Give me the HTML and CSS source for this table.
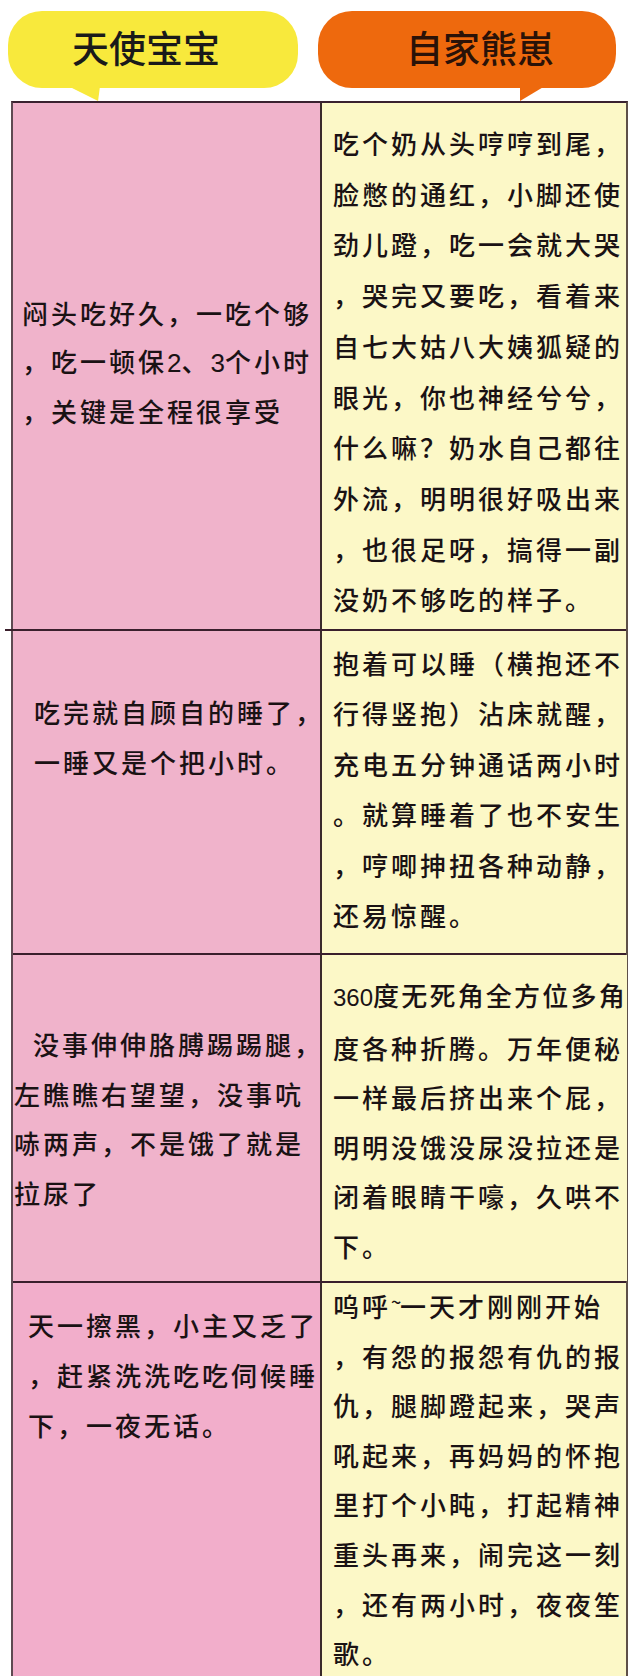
FILE: index.html
```html
<!DOCTYPE html>
<html lang="zh-CN">
<head>
<meta charset="utf-8">
<title>天使宝宝 vs 自家熊崽</title>
<link rel="stylesheet" href="styles.css">
</head>
<body>
<div class="page">
  <div class="heads">
    <div class="bubble yellow"><span class="btext">天使宝宝</span></div>
    <div class="bubble orange"><span class="btext">自家熊崽</span></div>
  </div>
  <div class="table">
    <div class="row r1">
      <div class="cell left"><p>闷头吃好久，一吃个够<br>，吃一顿保<span class="num">2</span>、<span class="num">3</span>个小时<br>，关键是全程很享受</p></div>
      <div class="cell right"><p>吃个奶从头哼哼到尾，<br>脸憋的通红，小脚还使<br>劲儿蹬，吃一会就大哭<br>，哭完又要吃，看着来<br>自七大姑八大姨狐疑的<br>眼光，你也神经兮兮，<br>什么嘛？奶水自己都往<br>外流，明明很好吸出来<br>，也很足呀，搞得一副<br>没奶不够吃的样子。</p></div>
    </div>
    <div class="row r2">
      <div class="cell left"><p>吃完就自顾自的睡了，<br>一睡又是个把小时。</p></div>
      <div class="cell right"><p>抱着可以睡（横抱还不<br>行得竖抱）沾床就醒，<br>充电五分钟通话两小时<br>。就算睡着了也不安生<br>，哼唧抻扭各种动静，<br>还易惊醒。</p></div>
    </div>
    <div class="row r3">
      <div class="cell left"><p><span class="indent">没事伸伸胳膊踢踢腿，</span><br>左瞧瞧右望望，没事吭<br>哧两声，不是饿了就是<br>拉尿了</p></div>
      <div class="cell right"><p><span class="tight"><span class="num small">360</span>度无死角全方位多角</span><br>度各种折腾。万年便秘<br>一样最后挤出来个屁，<br>明明没饿没尿没拉还是<br>闭着眼睛干嚎，久哄不<br>下。</p></div>
    </div>
    <div class="row r4">
      <div class="cell left"><p>天一擦黑，小主又乏了<br>，赶紧洗洗吃吃伺候睡<br>下，一夜无话。</p></div>
      <div class="cell right"><p>呜呼<span class="tilde">~</span>一天才刚刚开始<br>，有怨的报怨有仇的报<br>仇，腿脚蹬起来，哭声<br>吼起来，再妈妈的怀抱<br>里打个小盹，打起精神<br>重头再来，闹完这一刻<br>，还有两小时，夜夜笙<br>歌。</p></div>
    </div>
  </div>
</div>
</body>
</html>
```
FILE: styles.css
```css
html, body {
  margin: 0;
  padding: 0;
  background: #ffffff;
}

.page {
  width: 640px;
  height: 1676px;
  overflow: hidden;
  font-family: "Noto Sans CJK SC", "Noto Sans", sans-serif;
  color: #1a1214;
}

.heads {
  display: flex;
  padding: 11px 0 0 8px;
  gap: 20px;
  height: 90px;
  box-sizing: border-box;
}

.bubble {
  position: relative;
  width: 290px;
  height: 77px;
  border-radius: 34px;
  display: flex;
  align-items: center;
  justify-content: center;
}

.bubble::after {
  content: "";
  position: absolute;
  top: 75px;
  height: 15px;
}

.yellow {
  background: #f8e93c;
}

.yellow .btext {
  margin-right: 14px;
}

.yellow::after {
  left: 60px;
  width: 32px;
  background: #f8e93c;
  clip-path: polygon(0 0, 100% 0, 94% 100%);
}

.orange {
  width: 298px;
  background: #ee690d;
}

.orange .btext {
  margin-left: 26px;
  color: #2a1208;
}

.orange::after {
  left: 202px;
  width: 25px;
  background: #ee690d;
  clip-path: polygon(0 0, 100% 0, 0 100%);
}

.btext {
  font-size: 37px;
  font-weight: 500;
  letter-spacing: 0;
  color: #1a1a1a;
  line-height: 1;
  margin-bottom: 4px;
}

.table {
  margin: 11px 0 0 11px;
  width: 617px;
  border-top: 2px solid #3a2230;
  border-left: 2px solid #5e4a52;
  border-right: 2px solid #5e5048;
  box-sizing: border-box;
}

.row {
  display: flex;
  border-bottom: 2px solid #3a1f2c;
  box-sizing: border-box;
  position: relative;
}

.r1 { height: 528px; }
.r2 { height: 324px; }
.r3 { height: 328px; }
.r4 { height: 420px; border-bottom: none; }

.r1::after {
  content: "";
  position: absolute;
  left: -8px;
  bottom: -2px;
  width: 8px;
  height: 2px;
  background: #3a1f2c;
}

.cell {
  box-sizing: border-box;
}

.cell p {
  margin: 0;
  font-size: 26px;
  font-weight: 500;
  letter-spacing: 3px;
  white-space: nowrap;
}

.left {
  width: 309px;
  background: #f0b3cb;
  border-right: 2px solid #3a2a2a;
}

.right {
  flex: 1;
  background: #fcf8c7;
  padding-left: 11px;
}

.r4 .left {
  background: #f2aecb;
}

.num {
  font-family: "Liberation Sans", sans-serif;
  letter-spacing: 0;
}

.num.small {
  font-size: 24px;
}

.tight {
  letter-spacing: 2.2px;
}

.tilde {
  display: inline-block;
  font-size: 18px;
  letter-spacing: 0;
  vertical-align: 8px;
  width: 9px;
}

.indent {
  margin-left: 19px;
}

/* row-specific text placement */
.r1 .left { padding: 186px 0 0 9px; }
.r1 .left p { line-height: 47.5px; }
.r1 .right { padding-top: 15px; }
.r1 .right p { line-height: 50.7px; }

.r2 .left { padding: 56px 0 0 21px; }
.r2 .left p { line-height: 49.5px; }
.r2 .right { padding-top: 7px; }
.r2 .right p { line-height: 50.4px; }

.r3 .left { padding: 64px 0 0 1px; }
.r3 .left p { line-height: 49.5px; }
.r3 .right { padding-top: 15px; }
.r3 .right p { line-height: 49.6px; }

.r4 .left { padding: 17px 0 0 15px; }
.r4 .left p { line-height: 50px; }
.r4 .right { padding-top: 0; }
.r4 .right p { line-height: 49.6px; margin-top: -6px; }
```
